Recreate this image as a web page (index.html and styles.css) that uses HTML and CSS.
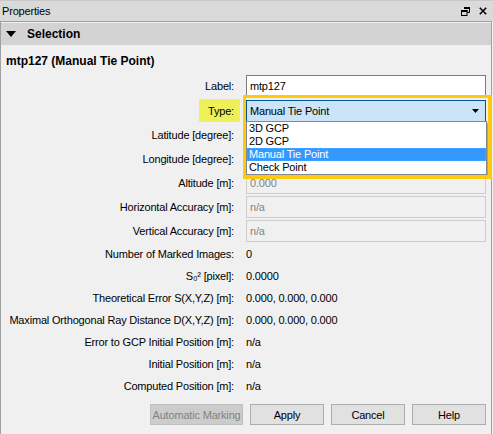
FILE: index.html
```html
<!DOCTYPE html>
<html>
<head>
<meta charset="utf-8">
<link rel="stylesheet" href="styles.css">
</head>
<body>
<div class="window">
  <div class="titlebar">
    <span class="title">Properties</span>
    <span class="tb-icons">
      <svg class="ico-float" width="9" height="9" viewBox="0 0 9 9">
        <path d="M3 0.5H8.5V5.5H6.5" fill="none" stroke="#000" stroke-width="1"/>
        <rect x="3" y="0" width="6" height="2" fill="#000"/>
        <rect x="0.5" y="3.5" width="5.5" height="5" fill="none" stroke="#000" stroke-width="1"/>
        <rect x="0" y="3" width="6.5" height="2" fill="#000"/>
      </svg>
      <svg class="ico-close" width="8" height="8" viewBox="0 0 8 8">
        <path d="M0.8 0.8L7.2 7.2M7.2 0.8L0.8 7.2" stroke="#000" stroke-width="1.6"/>
      </svg>
    </span>
  </div>
  <div class="frame">
    <div class="section-header">
      <svg class="tri" width="10" height="6" viewBox="0 0 10 6"><path d="M0 0H10L5 6Z" fill="#000"/></svg>
      <span>Selection</span>
    </div>
    <div class="content">
      <div class="item-title">mtp127 (Manual Tie Point)</div>
      <div class="form">
        <div class="lbl">Label:</div>
        <div class="val"><div class="input">mtp127</div></div>

        <div class="lbl"><span class="hl">Type:</span></div>
        <div class="val">
          <div class="combo"><span>Manual Tie Point</span>
            <svg width="7" height="4" viewBox="0 0 7 4"><path d="M0 0H7L3.5 4Z" fill="#000"/></svg>
          </div>
        </div>

        <div class="lbl">Latitude [degree]:</div>
        <div class="val"><div class="input disabled"></div></div>

        <div class="lbl">Longitude [degree]:</div>
        <div class="val"><div class="input disabled"></div></div>

        <div class="lbl">Altitude [m]:</div>
        <div class="val"><div class="input disabled">0.000</div></div>

        <div class="lbl">Horizontal Accuracy [m]:</div>
        <div class="val"><div class="input disabled">n/a</div></div>

        <div class="lbl">Vertical Accuracy [m]:</div>
        <div class="val"><div class="input disabled">n/a</div></div>

        <div class="lbl t">Number of Marked Images:</div>
        <div class="val t">0</div>

        <div class="lbl t">S₀² [pixel]:</div>
        <div class="val t">0.0000</div>

        <div class="lbl t">Theoretical Error S(X,Y,Z) [m]:</div>
        <div class="val t">0.000, 0.000, 0.000</div>

        <div class="lbl t">Maximal Orthogonal Ray Distance D(X,Y,Z) [m]:</div>
        <div class="val t">0.000, 0.000, 0.000</div>

        <div class="lbl t">Error to GCP Initial Position [m]:</div>
        <div class="val t">n/a</div>

        <div class="lbl t">Initial Position [m]:</div>
        <div class="val t">n/a</div>

        <div class="lbl t">Computed Position [m]:</div>
        <div class="val t">n/a</div>
      </div>
      <div class="buttons">
        <div class="btn btn-disabled btn-wide">Automatic Marking</div>
        <div class="btn">Apply</div>
        <div class="btn">Cancel</div>
        <div class="btn">Help</div>
      </div>
    </div>
  </div>

  <div class="dropdown">
    <div class="opt">3D GCP</div>
    <div class="opt">2D GCP</div>
    <div class="opt sel">Manual Tie Point</div>
    <div class="opt">Check Point</div>
  </div>
  <div class="annot"></div>
</div>
</body>
</html>
```
FILE: styles.css
```css
* { box-sizing: border-box; }
body {
  margin: 0;
  font-family: "Liberation Sans", Arial, sans-serif;
  font-size: 11px;
  letter-spacing: -0.18px;
  color: #000;
  background: #f0f0f0;
}
.window {
  position: relative;
  width: 493px;
  height: 434px;
  background: #f0f0f0;
  overflow: hidden;
}
.titlebar {
  height: 21px;
  background: #dadada;
  border-top: 1px solid #c8c8c8;
  display: flex;
  align-items: center;
  justify-content: space-between;
  padding: 0 6px 0 2px;
}
.title { font-size: 11px; }
.tb-icons { display: flex; align-items: center; gap: 9px; }
.ico-float, .ico-close { display: block; }
.frame {
  width: 492px;
  height: 413px;
  border: 1px solid #a0a0a0;
  border-bottom: none;
}
.section-header {
  height: 22px;
  margin-top: 1px;
  background: #d3d3d3;
  display: flex;
  align-items: center;
  gap: 11px;
  padding-left: 5px;
  font-weight: bold;
  font-size: 12px;
  letter-spacing: 0;
}
.tri { display: block; }
.content {
  padding: 8px 0 0 5px;
}
.item-title {
  font-weight: bold;
  font-size: 12px;
  letter-spacing: 0;
  line-height: 16px;
  height: 16px;
  margin-bottom: 6px;
}
.form {
  display: grid;
  grid-template-columns: 228px 240px;
  column-gap: 12px;
  row-gap: 2px;
}
.lbl {
  text-align: right;
  display: flex;
  align-items: center;
  justify-content: flex-end;
  white-space: nowrap;
}
.val { display: flex; align-items: center; }
.t { height: 20px; }
.input {
  width: 240px;
  height: 22px;
  border: 1px solid #7a7a7a;
  background: #fff;
  padding-left: 3px;
  display: flex;
  align-items: center;
}
.input.disabled {
  border-color: #cccccc;
  background: #f0f0f0;
  color: #838383;
}
.hl {
  background: #eef05a;
  display: inline-flex;
  align-items: center;
  height: 23px;
  padding: 0 6px 0 9px;
  margin-right: -6px;
}
.combo {
  width: 240px;
  height: 22px;
  border: 1px solid #005499;
  background: #cce4f7;
  display: flex;
  align-items: center;
  justify-content: space-between;
  padding: 0 6px 0 3px;
}
.combo svg { display: block; }
.buttons {
  display: flex;
  justify-content: flex-end;
  gap: 7px;
  margin-top: 8px;
  padding-right: 5px;
}
.btn {
  width: 74px;
  height: 21px;
  border: 1px solid #adadad;
  background: #e1e1e1;
  display: flex;
  align-items: center;
  justify-content: center;
  white-space: nowrap;
}
.btn-wide { width: 93px; }
.btn-disabled {
  background: #cccccc;
  border-color: #bfbfbf;
  color: #838383;
}
.dropdown {
  position: absolute;
  left: 246px;
  top: 121px;
  width: 241px;
  height: 54px;
  background: #fff;
  border: 1px solid #828790;
  box-shadow: 2px 2px 2px rgba(0,0,0,0.35);
}
.opt {
  height: 13px;
  line-height: 13px;
  padding-left: 2px;
}
.opt.sel {
  background: #3399ff;
  color: #fff;
  outline: 1px dotted #e08040;
  outline-offset: -1px;
}
.annot {
  position: absolute;
  left: 243px;
  top: 95px;
  width: 249px;
  height: 84px;
  border-style: solid;
  border-color: #ffc90e;
  border-width: 3px 4px 4px 3px;
}
```
